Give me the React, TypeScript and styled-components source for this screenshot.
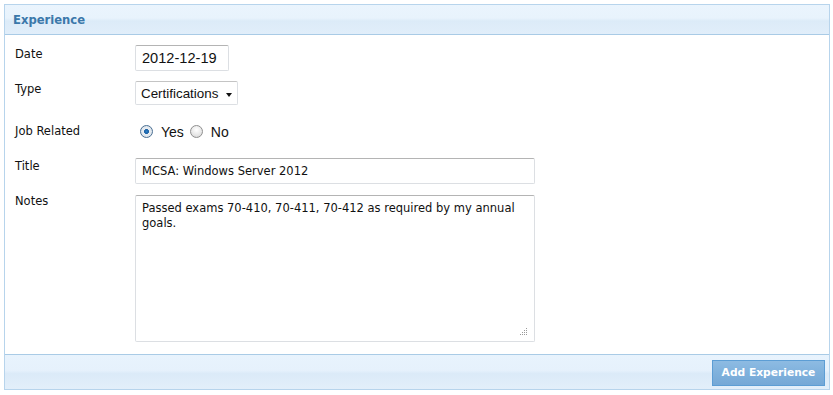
import React from "react";
import styled, { createGlobalStyle } from "styled-components";

const Global = createGlobalStyle`
  html, body { margin: 0; padding: 0; background: #ffffff; }
  body { font-family: "DejaVu Sans", Verdana, sans-serif; }
  * { box-sizing: border-box; }
`;

const Page = styled.div`
  padding: 4px 4px 0 4px;
  width: 833px;
`;

const Panel = styled.section`
  width: 826px;
  border: 1px solid #b7d4ec;
  background: #ffffff;
`;

const Header = styled.header`
  height: 30px;
  display: flex;
  align-items: center;
  padding-left: 8px;
  background: linear-gradient(to bottom, #eaf4fd 0%, #e8f3fc 45%, #dcebf8 55%, #e1eefa 100%);
  border-bottom: 1px solid #a9cbe6;
`;

const HeaderTitle = styled.h2`
  margin: 0;
  font-family: "DejaVu Sans", Verdana, sans-serif;
  font-size: 11.6px;
  font-weight: bold;
  color: #3b78aa;
`;

const Body = styled.div`
  padding: 10px 0 12px 10px;
  display: grid;
  grid-template-columns: 110px 1fr;
  column-gap: 10px;
  row-gap: 10px;
  align-items: start;
`;

const Label = styled.label<{ $offset?: number }>`
  font-family: "DejaVu Sans", Verdana, sans-serif;
  font-size: 11.5px;
  color: #111;
  padding-top: ${(p) => p.$offset ?? 3}px;
`;

const TextInput = styled.input<{ $w: number; $small?: boolean }>`
  width: ${(p) => p.$w}px;
  height: 26px;
  padding: 0 6px;
  border: 1px solid #dcdfe3;
  border-top-color: #b4b4b4;
  border-radius: 2px;
  font-family: ${(p) => (p.$small ? '"Liberation Sans", Arial, sans-serif' : '"DejaVu Sans", Verdana, sans-serif')};
  font-size: ${(p) => (p.$small ? "14.6px" : "11.5px")};
  color: #111;
  background: #fff;
  outline: none;
`;

const SelectWrap = styled.span`
  position: relative;
  display: inline-block;
  width: 103px;
  height: 24px;
  &::after {
    content: "";
    position: absolute;
    right: 6px;
    top: 12px;
    border-left: 3.5px solid transparent;
    border-right: 3.5px solid transparent;
    border-top: 4px solid #111;
    pointer-events: none;
  }
`;

const Select = styled.select`
  appearance: none;
  width: 100%;
  height: 100%;
  padding: 0 0 0 5px;
  border: 1px solid #dcdfe3;
  border-top-color: #c4c4c4;
  border-radius: 2px;
  background: #fff;
  font-family: "Liberation Sans", Arial, sans-serif;
  font-size: 13.4px;
  color: #111;
  outline: none;
`;

const RadioRow = styled.div`
  display: flex;
  align-items: center;
  height: 33px;
  padding-left: 5px;
`;

const RadioLabel = styled.label`
  display: inline-flex;
  align-items: center;
  gap: 8px;
  margin-right: 6px;
  font-family: "Liberation Sans", Arial, sans-serif;
  font-size: 14px;
  color: #111;
`;

const Radio = styled.input`
  appearance: none;
  margin: 0;
  width: 13px;
  height: 13px;
  border-radius: 50%;
  border: 1px solid #8f8f8f;
  background: radial-gradient(circle at 50% 35%, #ffffff 0%, #e6e6e6 60%, #cfcfcf 100%);
  &:checked {
    border-color: #4a6f93;
    background: radial-gradient(circle at 50% 50%, #2a7fc9 0%, #1a5fa3 28%, #e9eef3 34%, #d6dde4 100%);
  }
`;

const AreaWrap = styled.div`
  position: relative;
  width: 400px;
  height: 147px;
  margin-top: 1px;
`;

const TextArea = styled.textarea`
  display: block;
  width: 100%;
  height: 100%;
  padding: 5px 6px;
  border: 1px solid #dcdfe3;
  border-top-color: #b4b4b4;
  border-radius: 2px;
  font-family: "DejaVu Sans", Verdana, sans-serif;
  font-size: 11.5px;
  line-height: 15px;
  color: #111;
  resize: none;
  outline: none;
`;

const Grip = styled.svg`
  position: absolute;
  right: 8px;
  bottom: 7px;
  width: 7px;
  height: 7px;
`;

const Footer = styled.footer`
  height: 35px;
  border-top: 1px solid #a9cbe6;
  background: linear-gradient(to bottom, #e8f3fd 0%, #e6f1fc 45%, #dbeaf8 55%, #e3effa 100%);
  display: flex;
  justify-content: flex-end;
  align-items: center;
  padding-right: 4px;
`;

const Button = styled.button`
  height: 26px;
  width: 113px;
  padding: 0;
  border: 1px solid #5c9dd4;
  background: linear-gradient(to bottom, #8dbbe2 0%, #7fb1dc 50%, #75a8d6 100%);
  color: #ffffff;
  font-family: "DejaVu Sans", Verdana, sans-serif;
  font-weight: bold;
  font-size: 10.7px;
  margin-top: 1px;
  cursor: pointer;
`;

export default function App() {
  return (
    <Page>
      <Global />
      <Panel>
        <Header>
          <HeaderTitle>Experience</HeaderTitle>
        </Header>
        <Body>
          <Label $offset={2}>Date</Label>
          <TextInput $w={94} $small defaultValue="2012-12-19" />
          <Label $offset={1}>Type</Label>
          <SelectWrap>
            <Select defaultValue="Certifications">
              <option>Certifications</option>
              <option>Training</option>
              <option>Education</option>
            </Select>
          </SelectWrap>
          <Label $offset={9}>Job Related</Label>
          <RadioRow>
            <RadioLabel>
              <Radio type="radio" name="jr" defaultChecked />
              Yes
            </RadioLabel>
            <RadioLabel>
              <Radio type="radio" name="jr" />
              No
            </RadioLabel>
          </RadioRow>
          <Label $offset={1}>Title</Label>
          <TextInput $w={400} defaultValue="MCSA: Windows Server 2012" />
          <Label $offset={0}>Notes</Label>
          <AreaWrap>
            <TextArea defaultValue="Passed exams 70-410, 70-411, 70-412 as required by my annual goals." />
            <Grip viewBox="0 0 7 7">
              <g fill="#9a9a9a">
                <rect x="6" y="0" width="1" height="1" />
                <rect x="4" y="2" width="1" height="1" />
                <rect x="6" y="2" width="1" height="1" />
                <rect x="2" y="4" width="1" height="1" />
                <rect x="4" y="4" width="1" height="1" />
                <rect x="6" y="4" width="1" height="1" />
                <rect x="0" y="6" width="1" height="1" />
                <rect x="2" y="6" width="1" height="1" />
                <rect x="4" y="6" width="1" height="1" />
                <rect x="6" y="6" width="1" height="1" />
              </g>
            </Grip>
          </AreaWrap>
        </Body>
        <Footer>
          <Button>Add Experience</Button>
        </Footer>
      </Panel>
    </Page>
  );
}
